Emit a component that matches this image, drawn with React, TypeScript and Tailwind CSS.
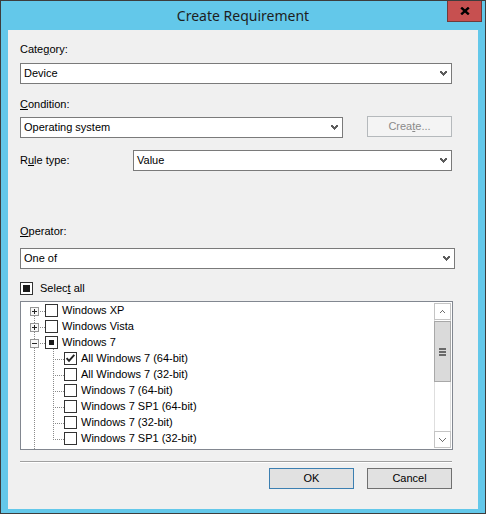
import React from "react";

function Chevron() {
  const px: [number, number][] = [
    [0, 0], [1, 0], [5, 0], [6, 0],
    [0, 1], [1, 1], [2, 1], [4, 1], [5, 1], [6, 1],
    [1, 2], [2, 2], [3, 2], [4, 2], [5, 2],
    [2, 3], [3, 3], [4, 3],
    [3, 4],
  ];
  return (
    <svg width="7" height="5" shapeRendering="crispEdges">
      {px.map(([x, y]) => (
        <rect key={`${x}-${y}`} x={x} y={y} width="1" height="1" fill="#5c5c5c" />
      ))}
    </svg>
  );
}

function Combo({ w, text }: { w: string; text: string }) {
  return (
    <div className={`${w} h-[21px] shrink-0 bg-white border border-[#7a7a7a] flex items-center justify-between pl-[3px] pr-[4px]`}>
      <span className="leading-[13px] text-black">{text}</span>
      <Chevron />
    </div>
  );
}

function Check({ state }: { state: "off" | "on" | "ind" }) {
  return (
    <div className="relative w-[13px] h-[13px] shrink-0 border border-[#333333] bg-white flex items-center justify-center">
      {state === "ind" && <div className="w-[5px] h-[5px] bg-[#1a1a1a]" />}
      {state === "on" && (
        <svg width="11" height="11" viewBox="0 0 11 11" className="absolute left-0 top-0">
          <path d="M1.6 5.2 L4 7.8 L9.3 1.8" fill="none" stroke="#222222" strokeWidth="1.9" strokeLinejoin="miter" />
        </svg>
      )}
    </div>
  );
}

function Expander({ open }: { open: boolean }) {
  return (
    <div className="mt-[5px] ml-[9px] w-[9px] h-[9px] shrink-0 border border-[#969696] bg-[#f8f8f8] flex items-center justify-center">
      <svg width="7" height="7" shapeRendering="crispEdges">
        <rect x="1" y="3" width="5" height="1" fill="#262626" />
        {!open && <rect x="3" y="1" width="1" height="5" fill="#262626" />}
      </svg>
    </div>
  );
}

function dots(x1: number, y1: number, x2: number, y2: number) {
  const out: [number, number][] = [];
  if (x1 === x2) {
    for (let y = y1; y <= y2; y += 2) out.push([x1, y]);
  } else {
    for (let x = x1; x <= x2; x += 2) out.push([x, y1]);
  }
  return out;
}

function TreeLines() {
  const pts: [number, number][] = [
    ...dots(13, 14, 13, 146),
    ...[0, 1, 2].flatMap((r) => dots(19, 9 + 16 * r, 23, 9 + 16 * r)),
    ...dots(32, 47, 32, 137),
    ...[0, 1, 2, 3, 4, 5].flatMap((k) => dots(34, 57 + 16 * k, 42, 57 + 16 * k)),
  ];
  return (
    <svg className="absolute left-0 top-0" width="413" height="147" shapeRendering="crispEdges">
      {pts.map(([x, y], i) => (
        <rect key={i} x={x} y={y} width="1" height="1" fill="#8a8a8a" />
      ))}
    </svg>
  );
}

function TopRow({ label, open, state }: { label: string; open: boolean; state: "off" | "on" | "ind" }) {
  return (
    <div className="relative flex items-start h-[16px]">
      <Expander open={open} />
      <div className="ml-[6px] mt-[2px]">
        <Check state={state} />
      </div>
      <span className="ml-[4px] leading-[16px] whitespace-nowrap text-black">{label}</span>
    </div>
  );
}

function ChildRow({ label, state }: { label: string; state: "off" | "on" | "ind" }) {
  return (
    <div className="relative flex items-start h-[16px]">
      <div className="ml-[43px] mt-[2px]">
        <Check state={state} />
      </div>
      <span className="ml-[4px] leading-[16px] whitespace-nowrap text-black">{label}</span>
    </div>
  );
}

function SmallArrow({ up }: { up: boolean }) {
  return (
    <svg width="7" height="4" shapeRendering="crispEdges">
      {up ? (
        <polyline points="0.5,3.5 3.5,0.5 6.5,3.5" fill="none" stroke="#6e6e6e" strokeWidth="1" />
      ) : (
        <polyline points="0.5,0.5 3.5,3.5 6.5,0.5" fill="none" stroke="#6e6e6e" strokeWidth="1" />
      )}
    </svg>
  );
}

function ScrollBar() {
  return (
    <div className="w-[17px] mr-[1px] my-[1px] flex flex-col bg-white border-x border-[#dedede]">
      <div className="-mx-px h-[17px] border border-[#c4c4c4] bg-white flex items-center justify-center">
        <SmallArrow up />
      </div>
      <div className="-mx-px mt-[1px] h-[61px] border border-[#a8a8a8] bg-[#dadada] flex flex-col items-center justify-center gap-[1px]">
        <div className="w-[7px] h-[2px] bg-[#6a6a6a]" />
        <div className="w-[7px] h-[2px] bg-[#6a6a6a]" />
        <div className="w-[7px] h-[2px] bg-[#6a6a6a]" />
      </div>
      <div className="flex-1" />
      <div className="-mx-px h-[17px] border border-[#c4c4c4] bg-white flex items-center justify-center">
        <SmallArrow up={false} />
      </div>
    </div>
  );
}

export default function App() {
  return (
    <div className="w-[486px] h-[514px] bg-[#63c8ea] border border-[#3d3d3d] flex flex-col overflow-hidden">
      <div className="relative h-[29px] shrink-0 flex items-center justify-center">
        <span className="font-['Noto_Sans',sans-serif] text-[14px] leading-[18px] text-[#1e1e1e] mt-[1px]">Create Requirement</span>
        <div className="absolute right-[3px] -top-px w-[35px] h-[22px] bg-[#c75050] border-x border-b border-[#6f3b3b] flex items-center justify-center">
          <svg width="10" height="8" viewBox="0 0 10 8">
            <path d="M1.2 0.6 L8.8 7.4 M8.8 0.6 L1.2 7.4" stroke="#000000" strokeWidth="2.4" fill="none" />
          </svg>
        </div>
      </div>
      <div className="mx-[7px] h-[479px] shrink-0 bg-[#f0f0f0] pl-[12px] flex flex-col font-['Liberation_Sans',Arial,sans-serif] text-[11px] text-black">
        <div className="mt-[13px] h-[13px] leading-[13px]">
          Cate<span className="underline">g</span>ory:
        </div>
        <div className="mt-[7px]">
          <Combo w="w-[432px]" text="Device" />
        </div>
        <div className="mt-[14px] h-[13px] leading-[13px]">
          <span className="underline">C</span>ondition:
        </div>
        <div className="mt-[6px] flex items-start">
          <Combo w="w-[323px]" text="Operating system" />
          <div className="ml-[24px] -mt-px w-[85px] h-[21px] border border-[#b5b9bc] bg-[#f4f4f4] flex items-center justify-center text-[#8a8a8a] leading-[13px]">
            Crea<span className="underline">t</span>e...
          </div>
        </div>
        <div className="mt-[12px] flex items-center">
          <div className="w-[113px] leading-[13px]">
            R<span className="underline">u</span>le type:
          </div>
          <Combo w="w-[319px]" text="Value" />
        </div>
        <div className="mt-[54px] h-[13px] leading-[13px]">
          <span className="underline">O</span>perator:
        </div>
        <div className="mt-[10px]">
          <Combo w="w-[435px]" text="One of" />
        </div>
        <div className="mt-[13px] flex items-center h-[13px]">
          <div className="w-[13px] h-[13px] border border-[#333333] bg-white flex items-center justify-center">
            <div className="w-[7px] h-[7px] bg-[#1a1a1a]" />
          </div>
          <span className="ml-[7px] leading-[13px]">
            Selec<span className="underline">t</span> all
          </span>
        </div>
        <div className="mt-[6px] w-[433px] h-[149px] border border-[#828790] bg-white flex">
          <div className="relative w-[413px] h-[147px] overflow-hidden">
            <TreeLines />
            <TopRow label="Windows XP" open={false} state="off" />
            <TopRow label="Windows Vista" open={false} state="off" />
            <TopRow label="Windows 7" open state="ind" />
            <ChildRow label="All Windows 7 (64-bit)" state="on" />
            <ChildRow label="All Windows 7 (32-bit)" state="off" />
            <ChildRow label="Windows 7 (64-bit)" state="off" />
            <ChildRow label="Windows 7 SP1 (64-bit)" state="off" />
            <ChildRow label="Windows 7 (32-bit)" state="off" />
            <ChildRow label="Windows 7 SP1 (32-bit)" state="off" />
          </div>
          <ScrollBar />
        </div>
        <div className="mt-[11px] w-[432px] h-[2px] border-t border-[#a0a0a0] border-b border-b-white" />
        <div className="mt-[5px] w-[432px] flex justify-end gap-[13px]">
          <div className="w-[85px] h-[21px] border border-[#3c7fb1] bg-[#e1e1e1] flex items-center justify-center leading-[13px]">
            OK
          </div>
          <div className="w-[85px] h-[21px] border border-[#707070] bg-[#e1e1e1] flex items-center justify-center leading-[13px]">
            Cancel
          </div>
        </div>
      </div>
    </div>
  );
}
